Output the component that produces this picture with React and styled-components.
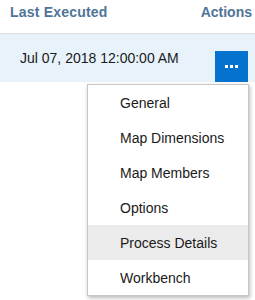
import React from "react";
import styled, { createGlobalStyle } from "styled-components";

const Global = createGlobalStyle`
  html, body { margin: 0; padding: 0; background: #fff; }
  body { font-family: "Liberation Sans", Arial, sans-serif; }
`;

const Table = styled.div`
  position: relative;
  width: 255px;
  height: 300px;
  overflow: hidden;
`;

const Header = styled.div`
  display: flex;
  justify-content: space-between;
  align-items: flex-start;
  height: 34px;
  box-sizing: border-box;
  padding: 4px 3px 0 10px;
  border-bottom: 1px solid #dcdfe2;
`;

const HeadCell = styled.div`
  font-size: 14px;
  font-weight: 700;
  line-height: 16px;
  color: #4f7597;
  letter-spacing: ${(p) => (p.$wide ? "0.2px" : "0")};
`;

const Row = styled.div`
  display: flex;
  height: 48px;
  background: #e7f2fa;
  padding-left: 20px;
  padding-right: 7px;
`;

const DateCell = styled.div`
  font-size: 14px;
  line-height: 16px;
  color: #1a1a1a;
  padding-top: 16px;
`;

const ActionButton = styled.button`
  margin-left: auto;
  align-self: flex-end;
  width: 33px;
  height: 31px;
  border: none;
  padding: 0;
  background: #0572ce;
  display: flex;
  align-items: center;
  justify-content: center;
  gap: 2px;
  cursor: pointer;
`;

const Dot = styled.span`
  width: 3px;
  height: 3px;
  background: #fff;
`;

const Menu = styled.ul`
  position: absolute;
  top: 84px;
  left: 87px;
  width: 160px;
  margin: 0;
  padding: 0;
  list-style: none;
  background: #fff;
  border: 1px solid #c6c6c6;
  box-shadow: 1px 2px 4px rgba(0, 0, 0, 0.28);
`;

const Item = styled.li`
  height: 35px;
  display: flex;
  align-items: center;
  padding-left: 32px;
  font-size: 14px;
  color: #1a1a1a;
  background: ${(p) => (p.$active ? "#ebebeb" : "transparent")};
`;

const items = [
  "General",
  "Map Dimensions",
  "Map Members",
  "Options",
  "Process Details",
  "Workbench",
];

export default function App() {
  return (
    <>
      <Global />
      <Table>
        <Header>
          <HeadCell $wide>Last Executed</HeadCell>
          <HeadCell>Actions</HeadCell>
        </Header>
        <Row>
          <DateCell>Jul 07, 2018 12:00:00 AM</DateCell>
          <ActionButton aria-label="Actions">
            <Dot />
            <Dot />
            <Dot />
          </ActionButton>
        </Row>
        <Menu>
          {items.map((it) => (
            <Item key={it} $active={it === "Process Details"}>
              {it}
            </Item>
          ))}
        </Menu>
      </Table>
    </>
  );
}
